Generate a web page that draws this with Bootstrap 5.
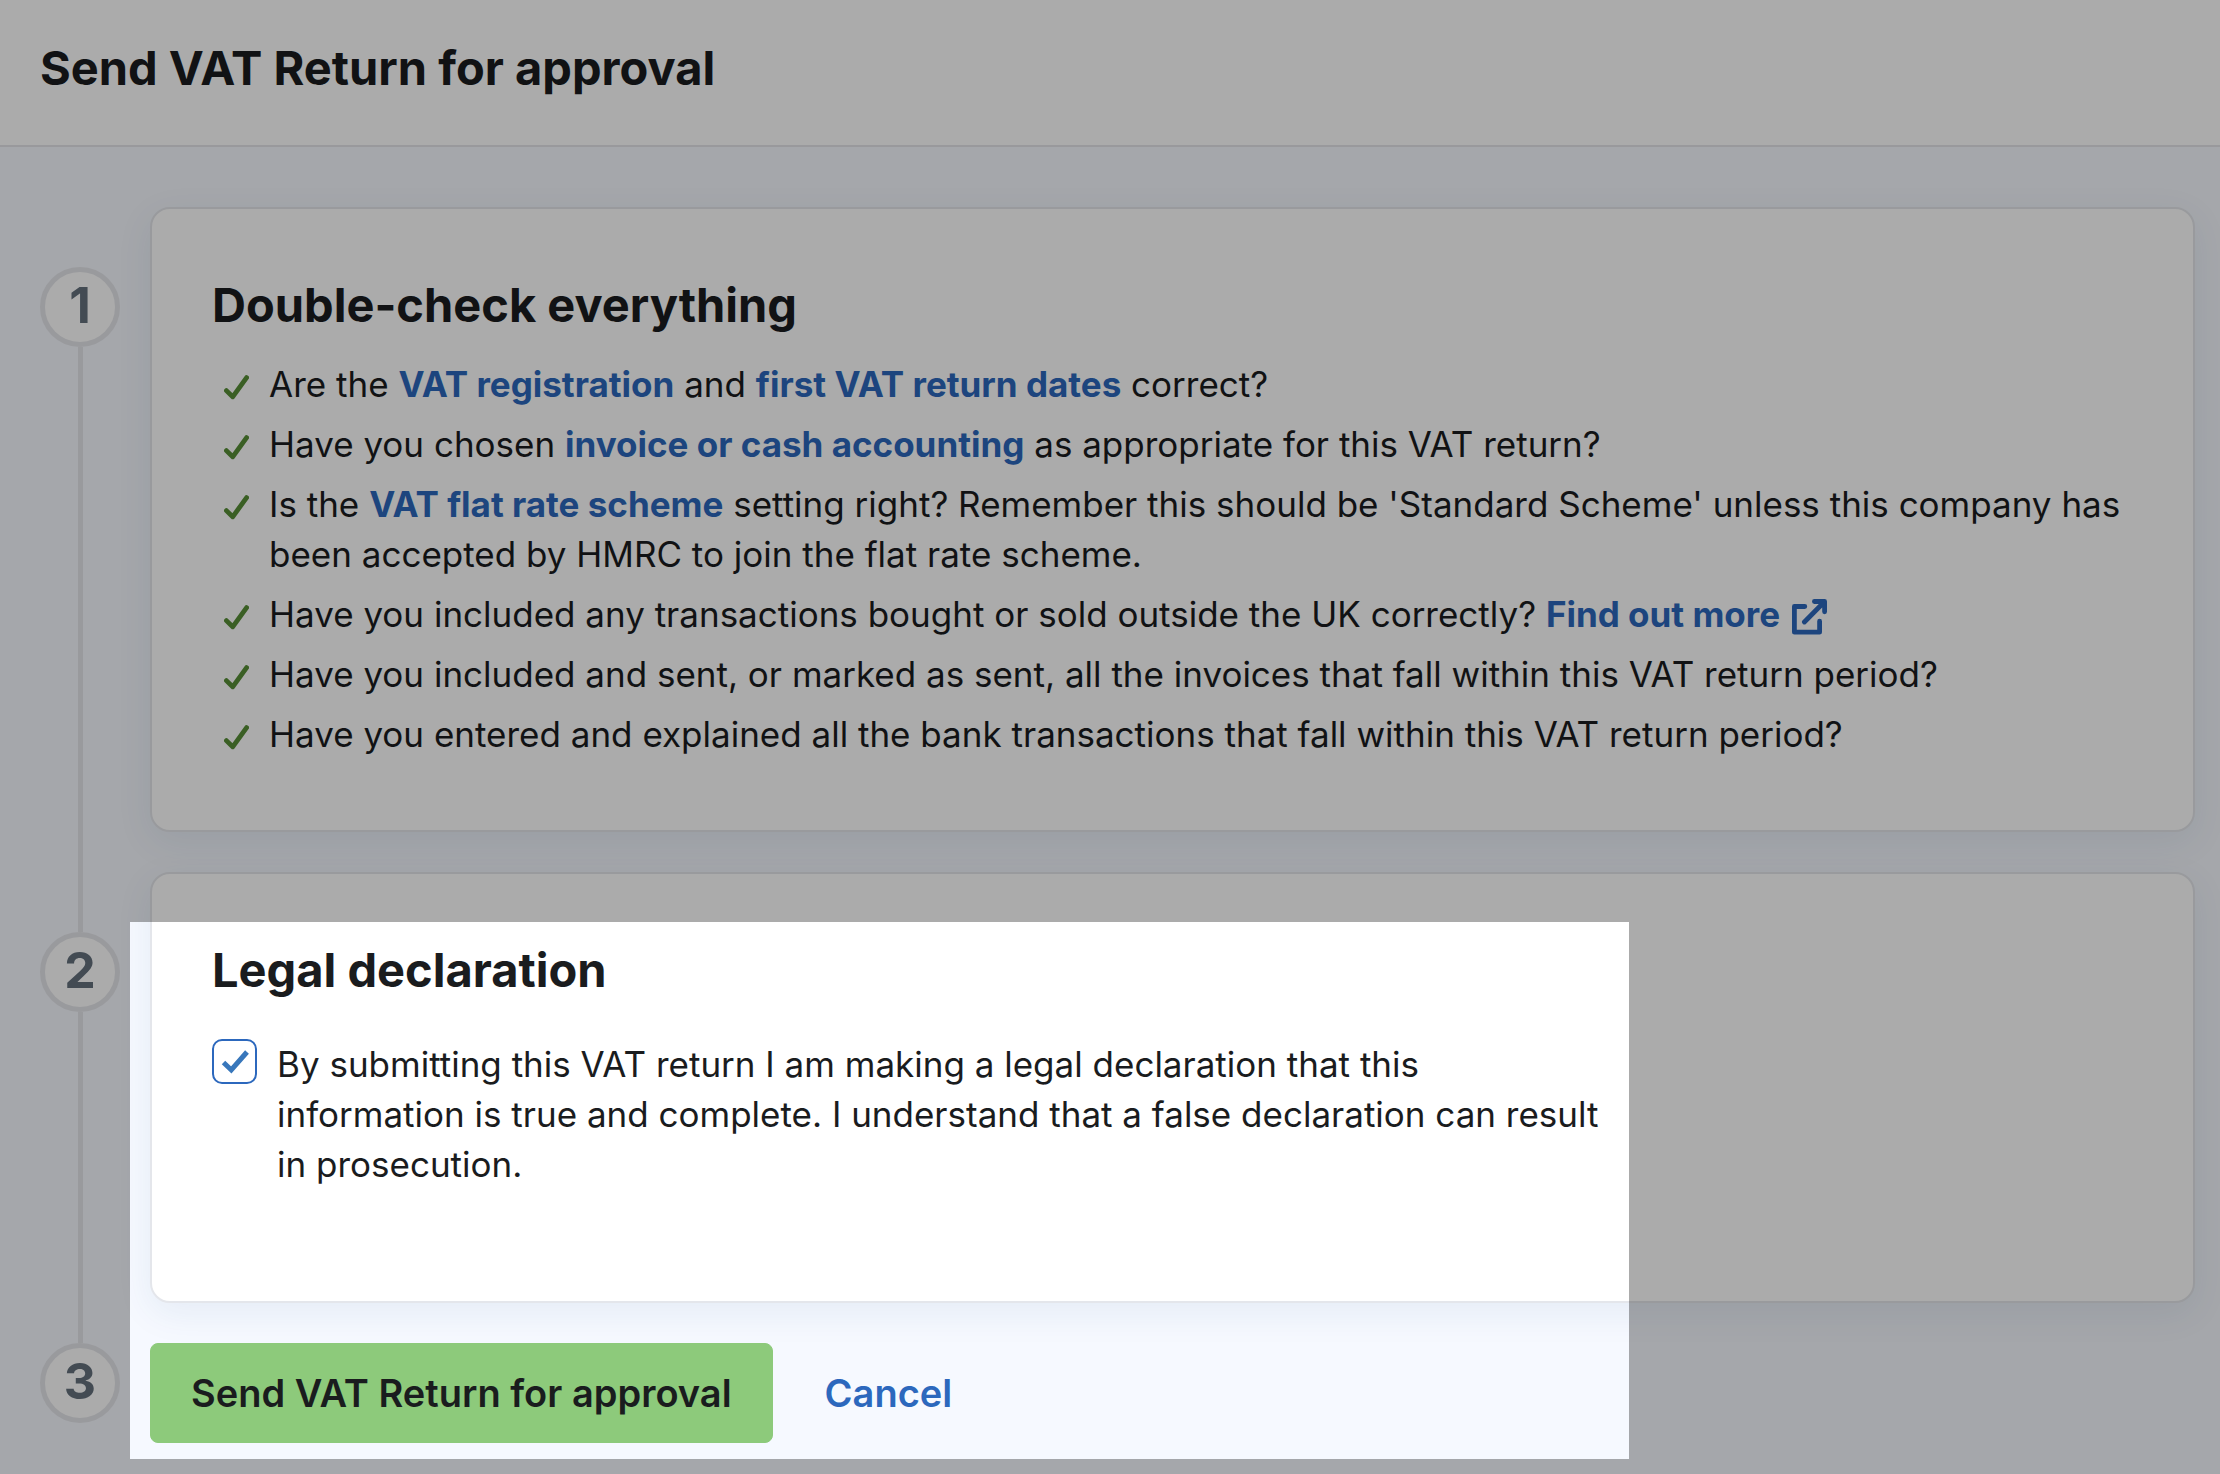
<!DOCTYPE html>
<html lang="en">
<head>
<meta charset="utf-8">
<meta name="viewport" content="width=device-width, initial-scale=1">
<title>Send VAT Return for approval</title>
<link href="https://cdn.jsdelivr.net/npm/bootstrap@5.3.0/dist/css/bootstrap.min.css" rel="stylesheet">
<style>
  body {
    background: #f6f9ff;
    color: #1a1c1e;
    font-family: Inter, "Liberation Sans", sans-serif;
    font-size: 35px;
    line-height: 50px;
    overflow: hidden;
  }
  a { color: #2c68bd; font-weight: 700; text-decoration: none; }
  a:hover { text-decoration: underline; }
  h1, h2 { font-size: 47px; line-height: 60px; font-weight: 700; margin: 0; }

  .page-head { padding: 38px 40px 47px; border-bottom: 2px solid #e4e5e9; }
  .steps { padding: 60px 25px 31px 40px; }

  /* Numbered rail on the left of each step */
  .rail { flex: 0 0 110px; padding-right: 30px; }
  .rail-line { width: 5px; background: #e5e6eb; }
  .rail-lead { height: 60px; }
  .rail-number {
    width: 80px;
    height: 80px;
    flex: none;
    border: 5px solid #e5e6eb;
    color: #64717d;
    font-size: 50px;
    line-height: 66px;
    font-weight: 700;
    text-align: center;
  }

  .panel {
    padding: 66px 60px 71px;
    margin-bottom: 40px;
    border: 2px solid #e4e6eb;
    border-radius: 20px;
    box-shadow: 0 10px 36px rgba(30, 80, 130, .08);
  }
  .panel-tall { padding-bottom: 112px; }

  .checks { display: grid; gap: 10px; margin: 24px 0 0; }
  .checks li { display: flex; padding-left: 12px; gap: 20px; }
  .tick { flex: none; margin-top: 16px; }

  .declare { margin-top: 39px; gap: 20px; max-width: 1393px; }
  .declare .form-check-input {
    flex: none;
    width: 45px;
    height: 45px;
    margin: 0;
    border: 2px solid #2c68bd;
    border-radius: 10px;
    background-origin: border-box;
  }
  .declare .form-check-input:checked {
    background-color: #fff;
    background-image: url("data:image/svg+xml,%3Csvg xmlns='http://www.w3.org/2000/svg' viewBox='0 0 45 45'%3E%3Cpath d='M11.5 23.5l7.8 7.5L35 13' fill='none' stroke='%233877bb' stroke-width='5'/%3E%3C/svg%3E");
  }

  .actions { gap: 52px; font-size: 38px; }
  .actions a { font-weight: 600; }
  .btn-approve {
    --bs-btn-color: #1a1c1e;
    --bs-btn-bg: #8dca7b;
    --bs-btn-border-color: #8dca7b;
    --bs-btn-hover-bg: #7dbd6a;
    --bs-btn-hover-border-color: #7dbd6a;
    --bs-btn-font-size: 38px;
    --bs-btn-font-weight: 600;
    --bs-btn-line-height: 50px;
    --bs-btn-padding-x: 40px;
    --bs-btn-padding-y: 24px;
    --bs-btn-border-radius: 8px;
  }

  /* Highlighted area; everything around it is dimmed */
  .spotlight {
    top: 50px;
    bottom: -16px;
    left: 90px;
    width: 1499px;
    box-shadow: 0 0 0 3000px rgba(0, 0, 0, .33);
    pointer-events: none;
  }
</style>
</head>
<body>
<svg class="d-none" aria-hidden="true">
  <symbol id="tick" viewBox="0 0 25 25"><path d="M2.4 15.6l6.3 6.2L22.6 2.6" fill="none" stroke="#578e37" stroke-width="4.8" stroke-linecap="round" stroke-linejoin="round"/></symbol>
</svg>

<header class="page-head bg-white">
  <h1>Send VAT Return for approval</h1>
</header>

<main class="steps">
  <section class="d-flex">
    <div class="rail d-flex flex-column align-items-center">
      <div class="rail-lead"></div>
      <div class="rail-number rounded-circle bg-white">1</div>
      <div class="rail-line flex-grow-1"></div>
    </div>
    <div class="panel bg-white flex-grow-1">
      <h2>Double-check everything</h2>
      <ul class="checks list-unstyled">
        <li><svg class="tick" width="25" height="25" aria-hidden="true"><use href="#tick"/></svg><span>Are the <a href="#">VAT registration</a> and <a href="#">first VAT return dates</a> correct?</span></li>
        <li><svg class="tick" width="25" height="25" aria-hidden="true"><use href="#tick"/></svg><span>Have you chosen <a href="#">invoice or cash accounting</a> as appropriate for this VAT return?</span></li>
        <li><svg class="tick" width="25" height="25" aria-hidden="true"><use href="#tick"/></svg><span>Is the <a href="#">VAT flat rate scheme</a> setting right? Remember this should be 'Standard Scheme' unless this company has been accepted by HMRC to join the flat rate scheme.</span></li>
        <li><svg class="tick" width="25" height="25" aria-hidden="true"><use href="#tick"/></svg><span>Have you included any transactions bought or sold outside the UK correctly? <a href="#">Find out more <svg class="ms-1" width="35" height="36" viewBox="0 0 35 36" fill="none" stroke="currentColor" stroke-width="4.8" stroke-linecap="round" stroke-linejoin="round" aria-hidden="true"><path d="M12.8 7.5H2.4V33.2H27.6V22.2M12.4 23L32.4 2.8M22.4 2.5H32.6V12.8"/></svg></a></span></li>
        <li><svg class="tick" width="25" height="25" aria-hidden="true"><use href="#tick"/></svg><span>Have you included and sent, or marked as sent, all the invoices that fall within this VAT return period?</span></li>
        <li><svg class="tick" width="25" height="25" aria-hidden="true"><use href="#tick"/></svg><span>Have you entered and explained all the bank transactions that fall within this VAT return period?</span></li>
      </ul>
    </div>
  </section>

  <div class="position-relative">
    <section class="d-flex">
      <div class="rail d-flex flex-column align-items-center">
        <div class="rail-line rail-lead"></div>
        <div class="rail-number rounded-circle bg-white">2</div>
        <div class="rail-line flex-grow-1"></div>
      </div>
      <div class="panel panel-tall bg-white flex-grow-1">
        <h2>Legal declaration</h2>
        <div class="declare d-flex">
          <input class="form-check-input" type="checkbox" id="declaration" checked>
          <label for="declaration">By submitting this VAT return I am making a legal declaration that this information is true and complete. I understand that a false declaration can result in prosecution.</label>
        </div>
      </div>
    </section>

    <section class="d-flex">
      <div class="rail d-flex flex-column align-items-center">
        <div class="rail-number rounded-circle bg-white">3</div>
      </div>
      <div class="actions d-flex align-items-center">
        <button type="button" class="btn btn-approve">Send VAT Return for approval</button>
        <a href="#">Cancel</a>
      </div>
    </section>

    <div class="spotlight position-absolute"></div>
  </div>
</main>
<script src="https://cdn.jsdelivr.net/npm/bootstrap@5.3.0/dist/js/bootstrap.bundle.min.js"></script>
</body>
</html>
